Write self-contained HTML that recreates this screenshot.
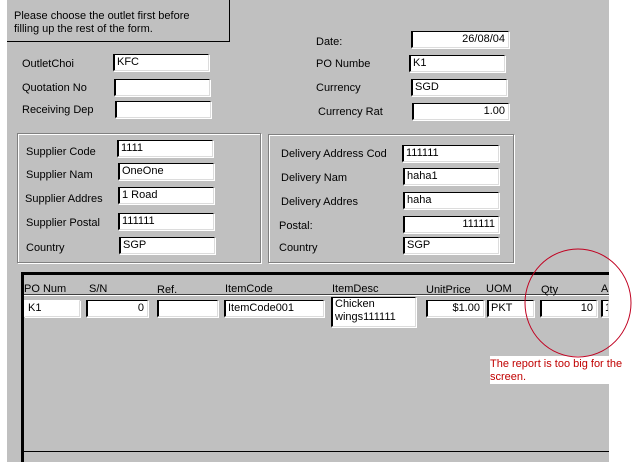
<!DOCTYPE html>
<html><head><style>
*{margin:0;padding:0;box-sizing:border-box}
body{width:633px;height:462px;background:#fff;position:relative;overflow:hidden;font-family:"Liberation Sans",sans-serif;font-size:11px;color:#000}
#g{position:absolute;left:7px;top:0;width:602px;height:462px;background:#c0c0c0}
.l{position:absolute;white-space:nowrap;line-height:13px;margin-top:2px}
.i{position:absolute;background:#fff;border-style:solid;border-width:1px 1px 1px 2px;border-color:#000 #dcdcdc #dcdcdc #000;box-shadow:1px 1px 0 #fff;line-height:14px;padding-left:2px;white-space:nowrap;overflow:hidden}
.r{text-align:right;padding-right:3px}
.box{position:absolute;border:1px solid #808080;box-shadow:inset 1px 1px 0 #fff,1px 1px 0 #fff}
</style></head><body>
<div id="g"></div>
<div style="position:absolute;left:7px;top:0;width:223px;height:42px;border-right:1px solid #000;border-bottom:1px solid #000"></div>
<div class="l" style="left:14px;top:8px">Please choose the outlet first before</div>
<div class="l" style="left:14px;top:21px">filling up the rest of the form.</div>

<div class="l" style="left:22px;top:56px">OutletChoi</div><div class="i" style="left:113px;top:54px;width:96px;height:17px">KFC</div>
<div class="l" style="left:22px;top:80px">Quotation No</div><div class="i" style="left:114px;top:79px;width:96px;height:17px"></div>
<div class="l" style="left:22px;top:102px">Receiving Dep</div><div class="i" style="left:115px;top:101px;width:96px;height:17px"></div>

<div class="l" style="left:316px;top:34px">Date:</div><div class="i r" style="left:411px;top:31px;width:98px;height:17px">26/08/04</div>
<div class="l" style="left:316px;top:56px">PO Numbe</div><div class="i" style="left:409px;top:55px;width:96px;height:17px">K1</div>
<div class="l" style="left:316px;top:80px">Currency</div><div class="i" style="left:411px;top:79px;width:96px;height:17px">SGD</div>
<div class="l" style="left:318px;top:104px">Currency Rat</div><div class="i r" style="left:412px;top:103px;width:97px;height:17px">1.00</div>

<div class="box" style="left:17px;top:133px;width:244px;height:130px"></div>
<div class="l" style="left:26px;top:144px">Supplier Code</div><div class="i" style="left:117px;top:140px;width:96px;height:17px">1111</div>
<div class="l" style="left:26px;top:167px">Supplier Nam</div><div class="i" style="left:118px;top:163px;width:96px;height:17px">OneOne</div>
<div class="l" style="left:25px;top:191px">Supplier Addres</div><div class="i" style="left:118px;top:187px;width:96px;height:17px">1 Road</div>
<div class="l" style="left:26px;top:215px">Supplier Postal</div><div class="i" style="left:118px;top:213px;width:96px;height:17px">111111</div>
<div class="l" style="left:26px;top:240px">Country</div><div class="i" style="left:119px;top:237px;width:96px;height:17px">SGP</div>

<div class="box" style="left:268px;top:134px;width:246px;height:129px"></div>
<div class="l" style="left:281px;top:146px">Delivery Address Cod</div><div class="i" style="left:402px;top:145px;width:97px;height:17px">111111</div>
<div class="l" style="left:281px;top:170px">Delivery Nam</div><div class="i" style="left:403px;top:168px;width:96px;height:17px">haha1</div>
<div class="l" style="left:281px;top:194px">Delivery Addres</div><div class="i" style="left:403px;top:192px;width:96px;height:17px">haha</div>
<div class="l" style="left:279px;top:218px">Postal:</div><div class="i r" style="left:403px;top:216px;width:96px;height:17px">111111</div>
<div class="l" style="left:279px;top:240px">Country</div><div class="i" style="left:403px;top:237px;width:96px;height:17px">SGP</div>

<div style="position:absolute;left:21px;top:272px;width:588px;height:190px;border-top:3px solid #000;border-left:3px solid #000"></div>
<div style="position:absolute;left:24px;top:294px;width:585px;height:2px;border-top:1px solid #404040;border-bottom:1px solid #fff"></div>
<div style="position:absolute;left:24px;top:451px;width:585px;height:1px;background:#000"></div>
<div class="l" style="left:24px;top:281px">PO Num</div>
<div class="l" style="left:89px;top:281px">S/N</div>
<div class="l" style="left:157px;top:282px">Ref.</div>
<div class="l" style="left:225px;top:281px">ItemCode</div>
<div class="l" style="left:332px;top:281px">ItemDesc</div>
<div class="l" style="left:426px;top:282px">UnitPrice</div>
<div class="l" style="left:486px;top:281px">UOM</div>
<div class="l" style="left:541px;top:282px">Qty</div>
<div class="l" style="left:601px;top:281px">A</div>

<div class="i" style="left:24px;top:300px;width:56px;height:17px;border-color:#fff #dcdcdc #dcdcdc #fff">K1</div>
<div class="i r" style="left:86px;top:300px;width:62px;height:17px">0</div>
<div class="i" style="left:157px;top:300px;width:61px;height:17px"></div>
<div class="i" style="left:224px;top:300px;width:100px;height:17px">ItemCode001</div>
<div class="i" style="left:331px;top:297px;width:85px;height:30px;white-space:normal;line-height:13px">Chicken wings111111</div>
<div class="i r" style="left:426px;top:300px;width:58px;height:17px">$1.00</div>
<div class="i" style="left:487px;top:300px;width:47px;height:17px">PKT</div>
<div class="i r" style="left:540px;top:300px;width:57px;height:17px">10</div>
<div class="i" style="left:601px;top:300px;width:8px;height:17px">1</div>

<div style="position:absolute;left:490px;top:356px;width:119px;height:28px;background:#fff"></div>
<div class="l" style="left:490px;top:356px;color:#c00000">The report is too big for the</div>
<div class="l" style="left:490px;top:369px;color:#c00000">screen.</div>
<svg style="position:absolute;left:0;top:0" width="633" height="462"><ellipse cx="578" cy="303" rx="53" ry="54" fill="none" stroke="#c00020" stroke-width="1"/></svg>
</body></html>
